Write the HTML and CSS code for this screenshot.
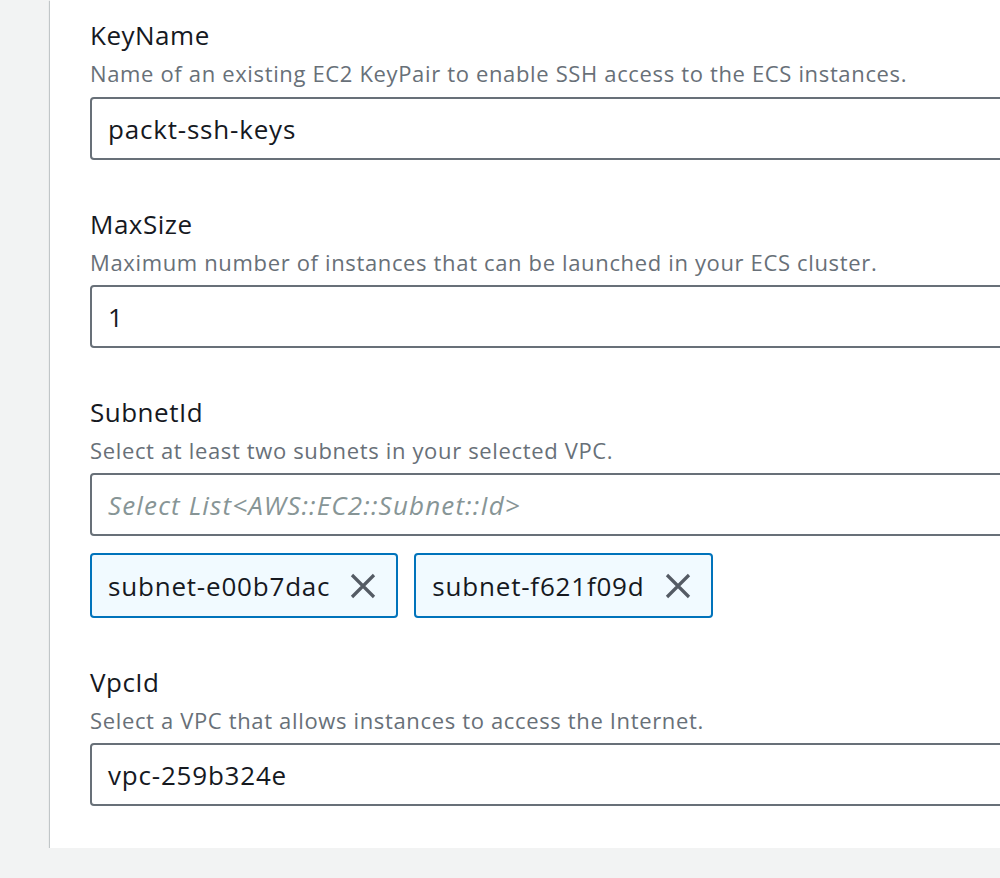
FILE: index.html
```html
<!DOCTYPE html>
<html lang="en">
<head>
<meta charset="utf-8">
<title>Parameters</title>
<link rel="stylesheet" href="styles.css">
</head>
<body>
<div class="panel">
  <div class="field">
    <div class="label">KeyName</div>
    <div class="desc">Name of an existing EC2 KeyPair to enable SSH access to the ECS instances.</div>
    <div class="input">packt-ssh-keys</div>
  </div>
  <div class="field">
    <div class="label">MaxSize</div>
    <div class="desc">Maximum number of instances that can be launched in your ECS cluster.</div>
    <div class="input">1</div>
  </div>
  <div class="field">
    <div class="label">SubnetId</div>
    <div class="desc">Select at least two subnets in your selected VPC.</div>
    <div class="input placeholder">Select List&lt;AWS::EC2::Subnet::Id&gt;</div>
    <div class="tokens">
      <div class="token"><span>subnet-e00b7dac</span>
        <svg class="x" width="26" height="26" viewBox="0 0 26 26"><path d="M2 2 L24 24 M24 2 L2 24" stroke="#545b64" stroke-width="3.2" fill="none"/></svg>
      </div>
      <div class="token"><span>subnet-f621f09d</span>
        <svg class="x" width="26" height="26" viewBox="0 0 26 26"><path d="M2 2 L24 24 M24 2 L2 24" stroke="#545b64" stroke-width="3.2" fill="none"/></svg>
      </div>
    </div>
  </div>
  <div class="field">
    <div class="label">VpcId</div>
    <div class="desc">Select a VPC that allows instances to access the Internet.</div>
    <div class="input">vpc-259b324e</div>
  </div>
</div>
</body>
</html>
```

FILE: styles.css
```css
html, body {
  margin: 0;
  padding: 0;
  overflow: hidden;
  background: #f2f3f3;
  font-family: "Open Sans", "Noto Sans", sans-serif;
  color: #16191f;
}
.panel {
  margin-left: 50px;
  width: 1100px;
  background: #ffffff;
  padding: 19px 40px 42px 40px;
  box-sizing: border-box;
  box-shadow: 0 1px 1px 0 rgba(0, 28, 36, 0.35), 1px 1px 1px 0 rgba(0, 28, 36, 0.15), -1px 1px 1px 0 rgba(0, 28, 36, 0.15);
}
.field {
  display: flex;
  flex-direction: column;
}
.field + .field {
  margin-top: 48px;
}
.label {
  font-size: 26px;
  line-height: 32px;
  letter-spacing: 0.5px;
  color: #16191f;
}
.desc {
  margin-top: 8px;
  font-size: 22px;
  line-height: 28px;
  letter-spacing: 0.65px;
  color: #687078;
}
.input {
  margin-top: 10px;
  height: 63px;
  box-sizing: border-box;
  border: 2px solid #687078;
  border-radius: 4px;
  padding: 0 16px;
  display: flex;
  align-items: center;
  font-size: 26px;
  letter-spacing: 0.8px;
  color: #16191f;
}
.field:not(:first-child) .input {
  margin-top: 9px;
}
.input.placeholder {
  font-style: italic;
  letter-spacing: 1.15px;
  color: #879596;
}
.tokens {
  margin-top: 17px;
  display: flex;
  gap: 16px;
}
.token {
  height: 65px;
  box-sizing: border-box;
  border: 2px solid #0073bb;
  border-radius: 4px;
  background: #f1faff;
  padding: 0 20px 0 16px;
  display: flex;
  align-items: center;
  gap: 20px;
  font-size: 26px;
  letter-spacing: 0.8px;
  color: #16191f;
}
.x {
  display: block;
}
```
